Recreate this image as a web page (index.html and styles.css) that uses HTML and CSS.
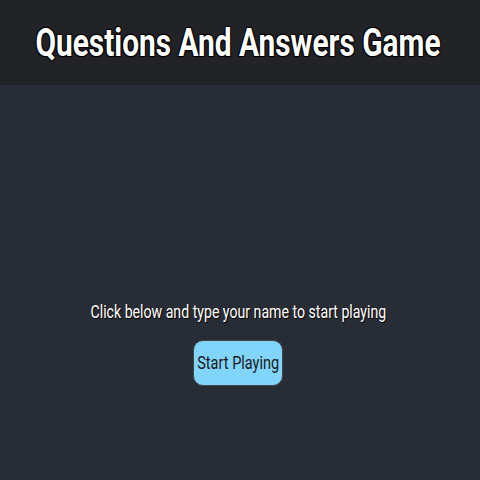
FILE: index.html
```html
<!DOCTYPE html>
<html>
<head>
<meta charset="utf-8">
<link rel="stylesheet" href="styles.css">
</head>
<body>
<header class="app-header">
  <h1 class="title"><span class="squeeze">Questions And Answers Game</span></h1>
</header>
<main class="app-main">
  <p class="intro"><span class="squeeze">Click below and type your name to start playing</span></p>
  <button class="start-btn"><span class="squeeze">Start Playing</span></button>
</main>
</body>
</html>
```
FILE: styles.css
```css
html, body {
  margin: 0;
  padding: 0;
  height: 100%;
}
body {
  background: #282c34;
  font-family: Roboto, "Liberation Sans", sans-serif;
  color: #fff;
}
.squeeze {
  display: inline-block;
  transform: scaleX(0.785);
  white-space: nowrap;
}
.app-header {
  background: #222327;
  height: 85px;
  display: flex;
  align-items: center;
  justify-content: center;
  padding-right: 4px;
}
.title {
  margin: 0;
  font-size: 38px;
  line-height: 44px;
  font-weight: 700;
  color: #fff;
  white-space: nowrap;
  text-shadow: 1px 1px 1px #000, -1px -1px 1px #000, 1px -1px 1px #000, -1px 1px 1px #000;
}
.app-main {
  display: flex;
  flex-direction: column;
  align-items: center;
  padding-top: 217px;
  padding-right: 4px;
}
.intro {
  margin: 0;
  font-size: 18px;
  line-height: 20px;
  white-space: nowrap;
  text-shadow: 1px 1px 1px #000;
}
.start-btn {
  margin-top: 18px;
  width: 90px;
  height: 46px;
  background: #81d4fa;
  border: 1px solid #444;
  border-radius: 10px;
  font-family: Roboto, "Liberation Sans", sans-serif;
  font-size: 18.5px;
  color: #1a1a1a;
  padding: 0;
  display: flex;
  align-items: center;
  justify-content: center;
  white-space: nowrap;
}
```
